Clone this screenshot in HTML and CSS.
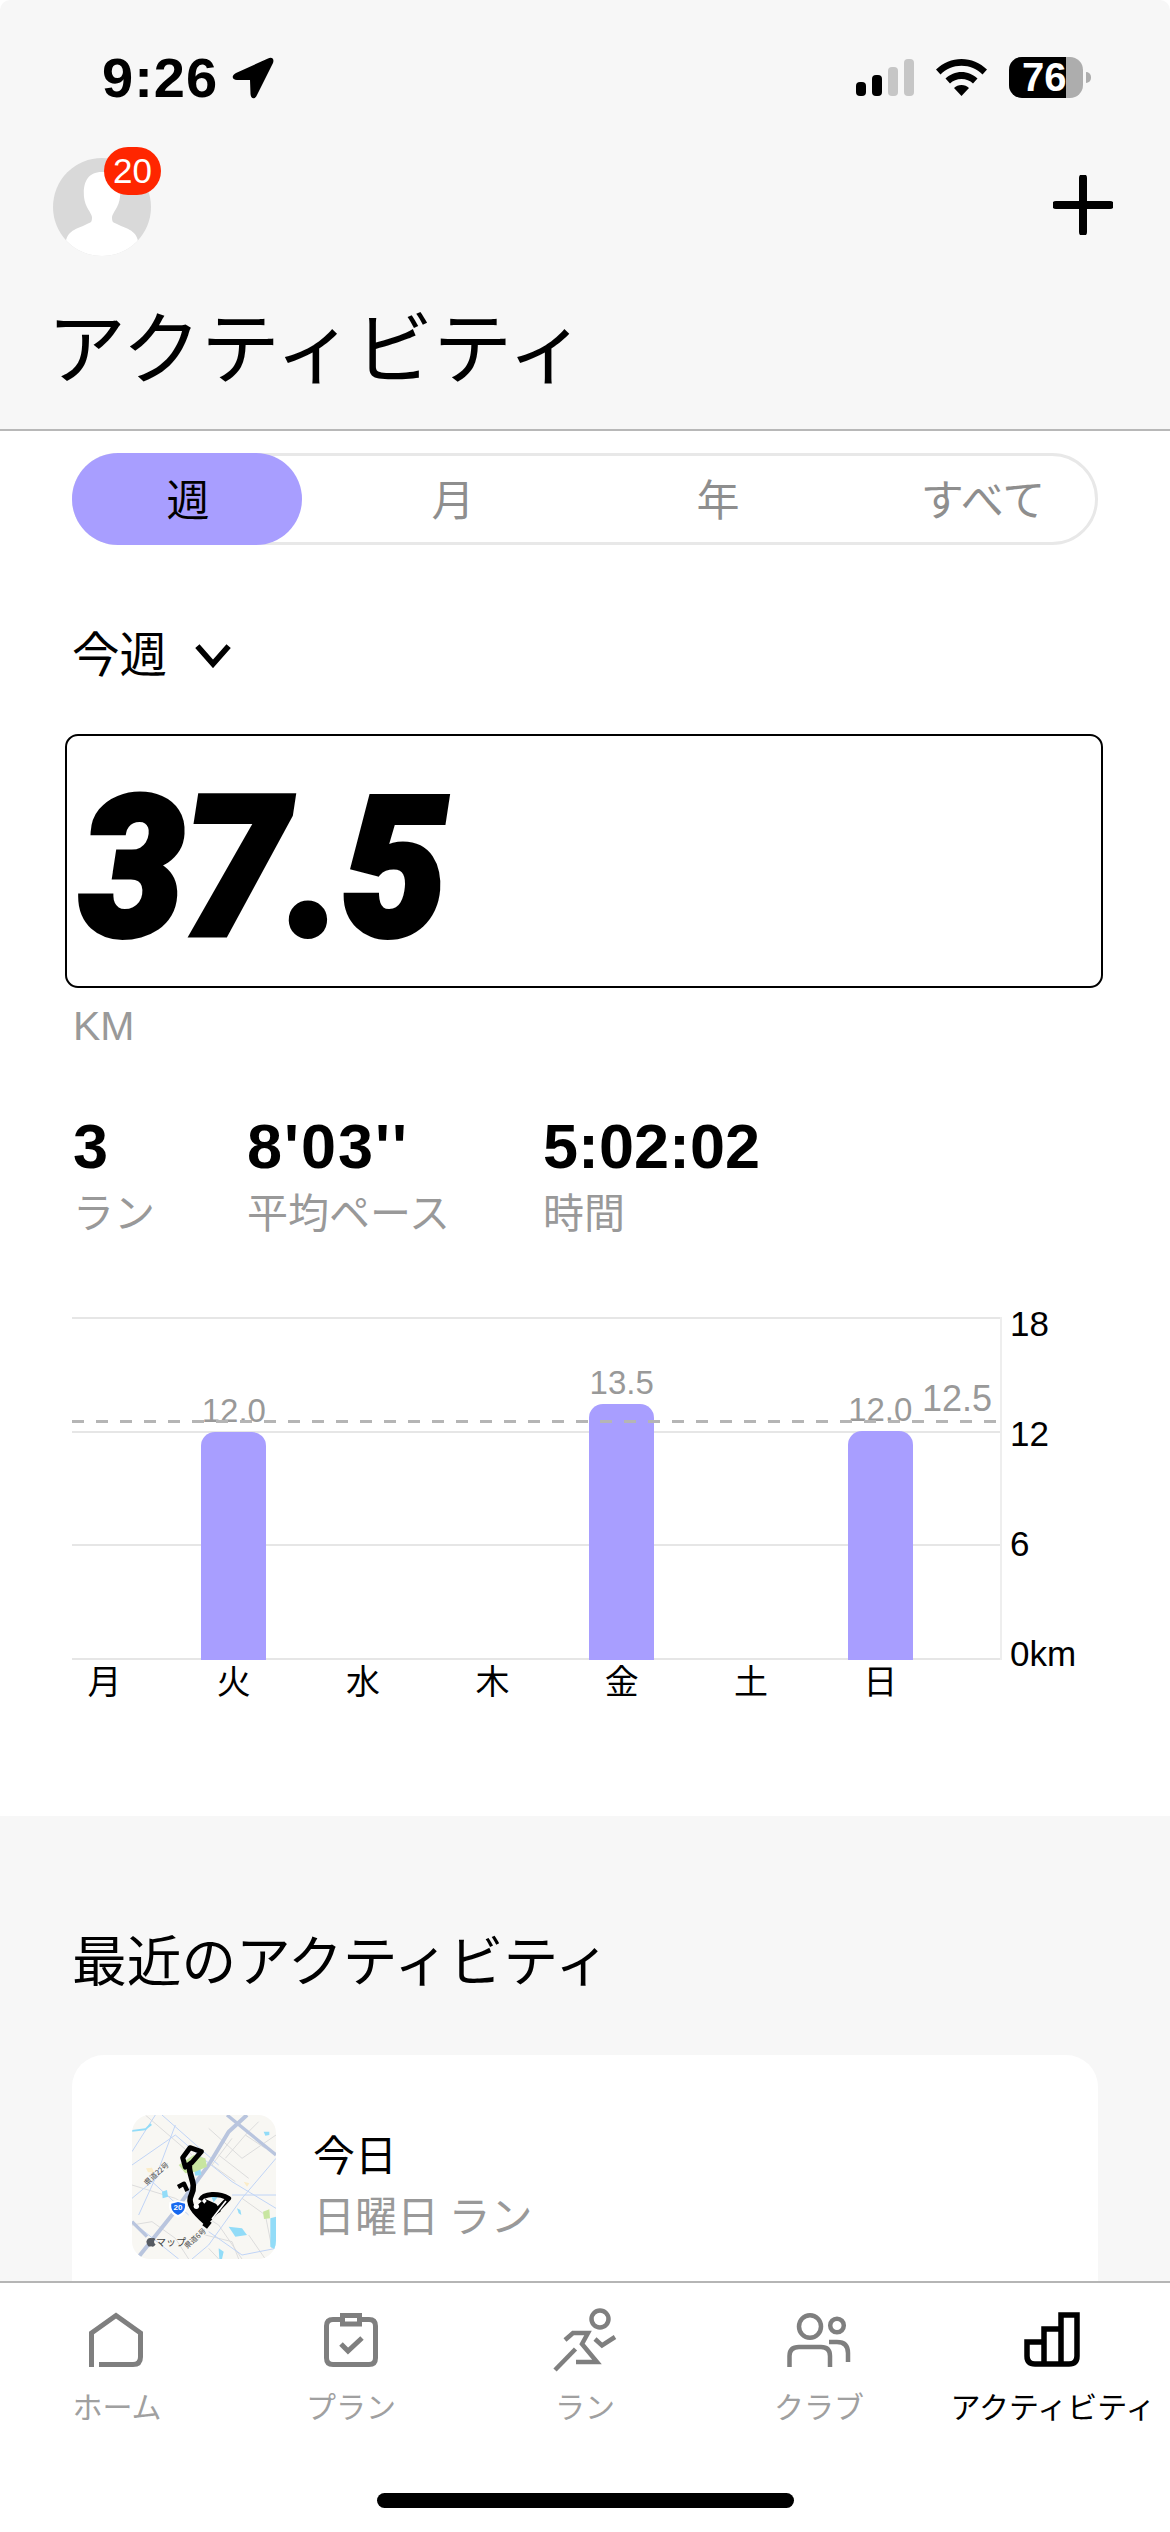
FILE: index.html
```html
<!DOCTYPE html>
<html lang="ja">
<head>
<meta charset="utf-8">
<title>アクティビティ</title>
<link rel="stylesheet" href="styles.css">
</head>
<body>
<div class="screen">
  <header class="header">
    <div class="status">
      <div class="status-left">
        <span class="time">9:26</span>
        <svg class="loc" viewBox="0 0 42 42"><path d="M36 1.500 L4 16 C-1 18.500 0 23 5 23 L18 23 L18.500 37 C19 42.500 23 42.500 25 38 L41 6 C42.500 2 40 -0.500 36 1.500Z" fill="#000"/></svg>
      </div>
      <div class="status-right">
        <div class="signal">
          <i class="sig s1"></i><i class="sig s2"></i><i class="sig s3"></i><i class="sig s4"></i>
        </div>
        <svg class="wifi" viewBox="0 0 51 37"><path d="M25.500 0 C35 0 44 4 51 10.500 L46.500 15.500 C41 10 33.500 6.800 25.500 6.800 C17.500 6.800 10 10 4.500 15.500 L0 10.500 C7 4 16 0 25.500 0Z M25.500 13 C31.500 13 37 15.500 41.500 19.500 L37 24.500 C34 21.600 30 20 25.500 20 C21 20 17 21.600 14 24.500 L9.500 19.500 C14 15.500 19.500 13 25.500 13Z M25.500 26 C28.500 26 31 27 33 29 L25.500 37 L18 29 C20 27 22.500 26 25.500 26Z" fill="#000"/></svg>
        <div class="battery">
          <div class="bat-body"><span class="bat-level"></span><span class="bat-text">76</span></div>
          <span class="bat-nub"></span>
        </div>
      </div>
    </div>
    <div class="head-row">
      <div class="avatar">
        <svg class="avatar-img" viewBox="0 0 100 100"><defs><clipPath id="av"><circle cx="50" cy="50" r="49"/></clipPath></defs><circle cx="50" cy="50" r="49" fill="#d9d9d9"/><path clip-path="url(#av)" d="M50 15 C34 15 31 28 32 40 C33 50 39 55 40 60 C40 66 39 65 33 68 C22 73 14 74 13 90 L13 100 L87 100 L87 90 C86 74 78 73 67 68 C61 65 60 66 60 60 C61 55 67 50 68 40 C69 28 66 15 50 15Z" fill="#fff"/></svg>
        <span class="badge">20</span>
      </div>
      <svg class="plus" viewBox="0 0 60 60"><path d="M30 3 V57 M3 30 H57" stroke="#000" stroke-width="8" stroke-linecap="round" fill="none"/></svg>
    </div>
    <h1 class="title">アクティビティ</h1>
  </header>

  <main class="main">
    <section class="summary">
      <div class="tabs">
        <div class="tab tab-on">週</div>
        <div class="tab">月</div>
        <div class="tab">年</div>
        <div class="tab">すべて</div>
      </div>
      <div class="period">
        <span>今週</span>
        <svg class="chev" viewBox="0 0 36 24"><path d="M3 3 L18 20 L33 3" stroke="#000" stroke-width="5.500" fill="none"/></svg>
      </div>
      <div class="distance"><span class="distance-num">37.5</span></div>
      <div class="km">KM</div>
      <div class="stats">
        <div class="stat stat-a"><div class="stat-num">3</div><div class="stat-label">ラン</div></div>
        <div class="stat stat-b"><div class="stat-num stat-pace">8'03''</div><div class="stat-label">平均ペース</div></div>
        <div class="stat"><div class="stat-num">5:02:02</div><div class="stat-label">時間</div></div>
      </div>
      <div class="chart">
        <div class="chart-main">
          <div class="plot">
            <div class="grid"><i></i><i></i><i></i></div>
            <div class="avg-line"></div>
            <span class="avg-label">12.5</span>
            <div class="bars">
              <div class="bar-col"></div>
              <div class="bar-col"><span class="bar-val">12.0</span><div class="bar" style="height:228px"></div></div>
              <div class="bar-col"></div>
              <div class="bar-col"></div>
              <div class="bar-col"><span class="bar-val">13.5</span><div class="bar" style="height:256px"></div></div>
              <div class="bar-col"></div>
              <div class="bar-col"><span class="bar-val">12.0</span><div class="bar" style="height:229px"></div></div>
            </div>
          </div>
          <div class="days">
            <span>月</span><span>火</span><span>水</span><span>木</span><span>金</span><span>土</span><span>日</span>
          </div>
        </div>
        <div class="yaxis"><span>18</span><span>12</span><span>6</span><span>0km</span></div>
      </div>
    </section>

    <section class="recent">
      <h2 class="recent-title">最近のアクティビティ</h2>
      <div class="card">
        <svg class="map" viewBox="0 0 432 432">
          <rect width="432" height="432" fill="#f8f7f3"/>
          <g fill="none" stroke="#dcdcdc" stroke-width="3">
            <path d="M0 210 L130 250 L260 330 L330 432"/>
            <path d="M40 0 L180 120 M230 40 L330 130 L432 60"/>
            <path d="M260 120 L350 190 M300 70 L240 150 L310 200 M340 60 L280 130"/>
            <path d="M0 330 L60 320 L130 370 L170 432 M220 360 L300 380 L320 432"/>
            <path d="M330 250 L400 300 L420 400 M230 400 L260 432 M350 360 L400 432"/>
            <path d="M380 20 L340 60 L400 100"/>
          </g>
          <g fill="none" stroke="#c0d4f6" stroke-width="3">
            <path d="M0 150 L130 60 L200 120 L300 200 L432 280"/>
            <path d="M0 250 L60 200 L170 300"/>
            <path d="M70 0 L0 110 M130 30 L70 190 L20 300"/>
            <path d="M432 130 L330 250 L230 390 L180 432"/>
            <path d="M300 240 L432 240"/>
            <path d="M0 320 L140 432 M230 350 L330 420 L432 400"/>
            <path d="M90 0 L260 150"/>
          </g>
          <g fill="none" stroke="#b9c5de" stroke-width="12">
            <path d="M20 425 L120 300 L230 150 L290 50 L345 0"/>
          </g>
          <g fill="none" stroke="#b9c5de" stroke-width="10">
            <path d="M285 0 L432 120 M0 320 L45 365"/>
          </g>
          <g fill="#92dcf8">
            <path d="M90 230 L105 225 L108 245 L92 250Z"/>
            <path d="M290 335 L330 340 L345 360 L310 365Z"/>
            <path d="M415 310 L432 305 L432 405 L415 395Z"/>
            <path d="M315 280 L325 285 L328 300 L320 295Z"/>
            <path d="M260 400 L275 410 L270 432 L262 432Z"/>
            <path d="M185 160 L205 160 L208 180 L190 182Z"/>
            <path d="M395 50 L412 50 L412 60 L400 62Z"/>
            <path d="M0 45 L40 40 L55 25 L60 30 L40 46 L0 50Z"/>
          </g>
          <g fill="#c8e6a0">
            <path d="M140 150 L185 120 L220 130 L225 155 L190 170 L160 175Z"/>
            <path d="M393 290 L412 283 L414 310 L396 312Z"/>
          </g>
          <path d="M42 160 L60 158 L66 172 L48 172Z M335 200 L352 205 L345 215Z" fill="#fbecc8"/>
          <path d="M235 238 L262 240 L245 262Z" fill="#92dcf8"/>
          <g fill="none" stroke="#000" stroke-linejoin="round">
            <path d="M152 128 L174 98 L208 110 L180 142 L160 156Z" stroke-width="15"/>
            <path d="M172 150 C170 185 195 205 178 240 C165 265 185 290 222 322" stroke-width="17"/>
            <path d="M205 256 C215 234 260 234 290 250 L222 322" stroke-width="15"/>
            <path d="M138 216 L156 206 L166 228" stroke-width="13"/>
          </g>
          <path d="M190 282 L218 256 L250 270 L262 288 L222 314Z" fill="#000" stroke="#000" stroke-width="8" stroke-linejoin="round"/>
          <path d="M218 336 L232 318" stroke="#000" stroke-width="18"/>
          <path d="M240 312 L282 258" stroke="#fff" stroke-width="5" fill="none"/>
          <circle cx="193" cy="274" r="8" fill="#fff"/>
          <path d="M217 250 L224 258 L217 266 L210 258Z" fill="#fff"/>
          <path d="M112 262 L138 256 L165 262 C168 285 160 298 138 308 C116 298 108 285 112 262Z" fill="#fff"/>
          <path d="M118 266 L138 261 L159 266 C161 283 154 292 138 300 C122 292 116 283 118 266Z" fill="#1668f0"/>
          <text x="138" y="285" class="map-shield">20</text>
          <text x="72" y="394" class="map-brand">マップ</text>
          <path d="M43 380 C46 368 54 368 60 370 C65 368 68 370 70 373 C64 378 66 386 71 388 C67 396 62 396 57 394 C51 396 46 394 43 380Z" fill="#555a62"/>
          <text class="map-road" transform="translate(45 212) rotate(-42)">県道22号</text>
          <text class="map-road" transform="translate(166 402) rotate(-42)">県道6号</text>
        </svg>
        <div class="card-text">
          <div class="card-day">今日</div>
          <div class="card-sub">日曜日 ラン</div>
        </div>
      </div>
    </section>
  </main>

  <nav class="tabbar">
    <div class="nav-items">
      <div class="nav">
        <svg class="nav-icon" viewBox="0 0 80 75"><path d="M14.500 68 V34 L39 16.500 L63.500 34 V58 Q63.500 65.500 56 65.500 H22" fill="none" stroke="#7f7f7f" stroke-width="5"/></svg>
        <span>ホーム</span>
      </div>
      <div class="nav">
        <svg class="nav-icon" viewBox="0 0 80 75"><path d="M30 20.500 H22 Q15.500 20.500 15.500 27 V59 Q15.500 65.500 22 65.500 H58 Q64.500 65.500 64.500 59 V27 Q64.500 20.500 58 20.500 H50" fill="none" stroke="#7f7f7f" stroke-width="5"/><rect x="31.500" y="16.500" width="17" height="8.500" fill="none" stroke="#7f7f7f" stroke-width="5"/><path d="M30 45 L37 52 L51 39" fill="none" stroke="#7f7f7f" stroke-width="5"/></svg>
        <span>プラン</span>
      </div>
      <div class="nav">
        <svg class="nav-icon" viewBox="0 0 80 75"><g transform="translate(0 1)"><circle cx="55" cy="19" r="8.500" fill="none" stroke="#7f7f7f" stroke-width="4.500"/><path d="M20 40 L28 33 H43 L37 44 L52 62 H31" fill="none" stroke="#7f7f7f" stroke-width="4.500"/><path d="M30.500 49 L10 70" fill="none" stroke="#7f7f7f" stroke-width="4.500"/><path d="M50 39 L57 45.500 L70 37" fill="none" stroke="#7f7f7f" stroke-width="4.500"/></g></svg>
        <span>ラン</span>
      </div>
      <div class="nav">
        <svg class="nav-icon" viewBox="0 0 80 75"><ellipse cx="31" cy="27.500" rx="11" ry="11.300" fill="none" stroke="#7f7f7f" stroke-width="4.500"/><circle cx="58" cy="26.500" r="6.800" fill="none" stroke="#7f7f7f" stroke-width="4.500"/><path d="M10.500 68 V57 Q10.500 48 20 48 H42 Q51 48 51 57 V68" fill="none" stroke="#7f7f7f" stroke-width="4.500"/><path d="M50 43 H58 Q69 43 69 54 V63" fill="none" stroke="#7f7f7f" stroke-width="4.500"/></svg>
        <span>クラブ</span>
      </div>
      <div class="nav nav-on">
        <svg class="nav-icon" viewBox="0 0 80 75"><path d="M14 43 H31 V30 H48 V16 H64 V57 Q64 65 56 65 H22 Q14 65 14 57Z M31 30 V65 M48 30 V65" fill="none" stroke="#000" stroke-width="5.500"/></svg>
        <span>アクティビティ</span>
      </div>
    </div>
    <div class="home-bar"></div>
  </nav>
</div>
</body>
</html>
```
FILE: styles.css
```css
* { box-sizing: border-box; }
html, body { margin: 0; padding: 0; background: #fff; }
body { font-family: "Liberation Sans", "Noto Sans CJK JP", sans-serif; color: #000; }
.screen { width: 1170px; height: 2532px; overflow: hidden; display: flex; flex-direction: column; }

.header { height: 431px; flex: none; background: #f7f7f7; border-bottom: 2px solid #b8b8b8; border-radius: 10px 10px 0 0; padding-top: 57px; }
.status { display: flex; justify-content: space-between; height: 42px; }
.status-left { display: flex; align-items: center; margin-left: 102px; }
.time { font-size: 56px; font-weight: 700; line-height: 42px; letter-spacing: 1px; }
.loc { width: 42px; height: 42px; margin-left: 14px; }
.status-right { display: flex; align-items: flex-start; margin-right: 79px; }
.signal { display: flex; gap: 6px; align-items: flex-end; height: 39px; margin-right: 22px; }
.sig { width: 10px; border-radius: 4px; display: block; }
.s1 { height: 14px; background: #000; }
.s2 { height: 21px; background: #000; }
.s3 { height: 29px; background: #c6c6c6; }
.s4 { height: 37px; background: #c6c6c6; }
.wifi { width: 51px; height: 37px; margin: 2px 22px 0 0; }
.battery { display: flex; align-items: center; height: 41px; }
.bat-body { position: relative; width: 74px; height: 41px; border-radius: 13px; background: #adadad; }
.bat-level { display: block; width: 57px; height: 41px; background: #000; border-radius: 13px 0 0 13px; }
.bat-text { position: absolute; left: 13px; top: 0; font-size: 40px; line-height: 41px; font-weight: 700; color: #fff; }
.bat-nub { width: 5px; height: 11px; margin-left: 3px; border-radius: 0 5px 5px 0; background: #adadad; }

.head-row { display: flex; justify-content: space-between; align-items: flex-start; height: 116px; margin-top: 58px; }
.avatar { position: relative; margin: 0 0 0 52px; width: 100px; height: 100px; }
.avatar-img { width: 100px; height: 100px; display: block; }
.badge { position: absolute; left: 52px; top: -10px; width: 57px; height: 48px; border-radius: 24px; background: #ff2600; color: #fff; font-size: 35px; line-height: 48px; text-align: center; }
.plus { width: 60px; height: 60px; margin: 18px 57px 0 0; }
.title { margin: 21px 0 0 47px; font-family: "Noto Sans CJK JP", sans-serif; font-size: 79px; font-weight: 400; line-height: 100px; }

.main { flex: 1; min-height: 0; overflow: hidden; background: #f7f7f7; display: flex; flex-direction: column; }
.summary { flex: none; height: 1385px; background: #fff; padding: 22px 0 0 72px; }

.tabs { display: flex; gap: 35px; width: 1026px; height: 92px; border: 3px solid #e8e8e8; border-radius: 46px; }
.tab { flex: none; width: 230px; height: 92px; margin: -3px 0; display: flex; align-items: center; justify-content: center; padding: 0 0 5px 2px; font-family: "Noto Sans CJK JP", sans-serif; font-size: 43px; color: #8e8e8e; border-radius: 46px; }
.tab:first-child { margin-left: -3px; }
.tab-on { background: #a89eff; color: #000; }

.period { display: flex; align-items: center; gap: 27px; height: 60px; margin-top: 76px; font-family: "Noto Sans CJK JP", sans-serif; font-size: 47.500px; }
.chev { width: 38px; height: 25px; margin-top: 8px; }

.distance { width: 1038px; height: 254px; margin: 53px 0 0 -7px; border: 2px solid #000; border-radius: 13px; padding-left: 13px; padding-top: 15px; display: flex; align-items: center; }
.distance-num { font-family: "Roboto", sans-serif; font-weight: 900; font-style: italic; font-size: 195px; line-height: 1; -webkit-text-stroke: 6px #000; transform: scaleX(.95); transform-origin: left center; }

.km { margin-top: 13px; font-size: 41px; line-height: 50px; color: #999; padding-left: 1px; }

.stats { display: flex; margin-top: 60px; padding-left: 1px; }
.stat-a { width: 174px; }
.stat-b { width: 296px; }
.stat-num { font-size: 63px; font-weight: 700; line-height: 70px; }
.stat-pace { letter-spacing: 2px; }
.stat-label { margin-top: 4px; font-family: "Noto Sans CJK JP", sans-serif; font-size: 41px; line-height: 50px; color: #999; }

.chart { display: flex; margin-top: 82px; }
.chart-main { width: 930px; flex: none; }
.plot { position: relative; height: 343px; border-right: 2px solid #eee; }
.grid { display: flex; flex-direction: column; height: 343px; border-bottom: 2px solid #e6e6e6; }
.grid i { display: block; flex: 1; border-top: 2px solid #e6e6e6; }
.avg-line { position: absolute; left: 0; right: 0; top: 103px; height: 3px; background: repeating-linear-gradient(90deg, #b5b5b5 0 12px, transparent 12px 24px); z-index: 2; }
.avg-label { position: absolute; right: 8px; top: 62px; font-size: 36px; line-height: 40px; color: #999; }
.bars { position: absolute; left: 0; right: 0; bottom: 0; height: 343px; display: flex; gap: 64.300px; align-items: flex-end; }
.bar-col { width: 65px; flex: none; display: flex; flex-direction: column; align-items: center; }
.bar { width: 65px; background: #a89eff; border-radius: 14px 14px 0 0; }
.bar-val { font-size: 33px; line-height: 30px; color: #999; margin-bottom: 6px; }
.days { display: flex; gap: 64.300px; font-family: "Noto Sans CJK JP", sans-serif; font-size: 34px; line-height: 40px; height: 46px; }
.days span { width: 65px; text-align: center; flex: none; }
.yaxis { width: 120px; height: 370px; margin: -13px 0 0 8px; display: flex; flex-direction: column; justify-content: space-between; font-size: 35px; line-height: 40px; }

.recent { flex: 1; padding: 107px 72px 0; }
.recent-title { margin: 0; font-family: "Noto Sans CJK JP", sans-serif; font-size: 54.700px; font-weight: 400; line-height: 70px; }
.card { display: flex; align-items: flex-start; margin-top: 62px; height: 400px; background: #fff; border-radius: 32px; padding: 60px 0 0 60px; gap: 37px; }
.map { width: 144px; height: 144px; border-radius: 18px; flex: none; display: block; }
.map-shield { font-family: "Liberation Sans", sans-serif; font-size: 24px; font-weight: 700; fill: #fff; text-anchor: middle; }
.map-brand { font-family: "Noto Sans CJK JP", sans-serif; font-size: 30px; fill: #444; }
.map-road { font-family: "Noto Sans CJK JP", sans-serif; font-size: 22px; fill: #444; }
.card-text { font-family: "Noto Sans CJK JP", sans-serif; font-size: 42px; line-height: 56px; }
.card-day { margin-top: 10px; }
.card-sub { margin-top: 5px; color: #999; white-space: pre; }

.tabbar { flex: none; height: 251px; background: #fff; border-top: 2px solid #b5b5b5; position: relative; }
.nav-items { display: flex; padding-top: 16px; }
.nav { width: 234px; display: flex; flex-direction: column; align-items: center; font-family: "Noto Sans CJK JP", sans-serif; font-size: 30px; line-height: 40px; color: #a0a0a0; white-space: nowrap; }
.nav-icon { width: 80px; height: 75px; display: block; margin-bottom: 11px; flex: none; }
.nav-on { color: #000; }
.home-bar { position: absolute; left: 377px; top: 210px; width: 417px; height: 15px; border-radius: 8px; background: #000; }
```
